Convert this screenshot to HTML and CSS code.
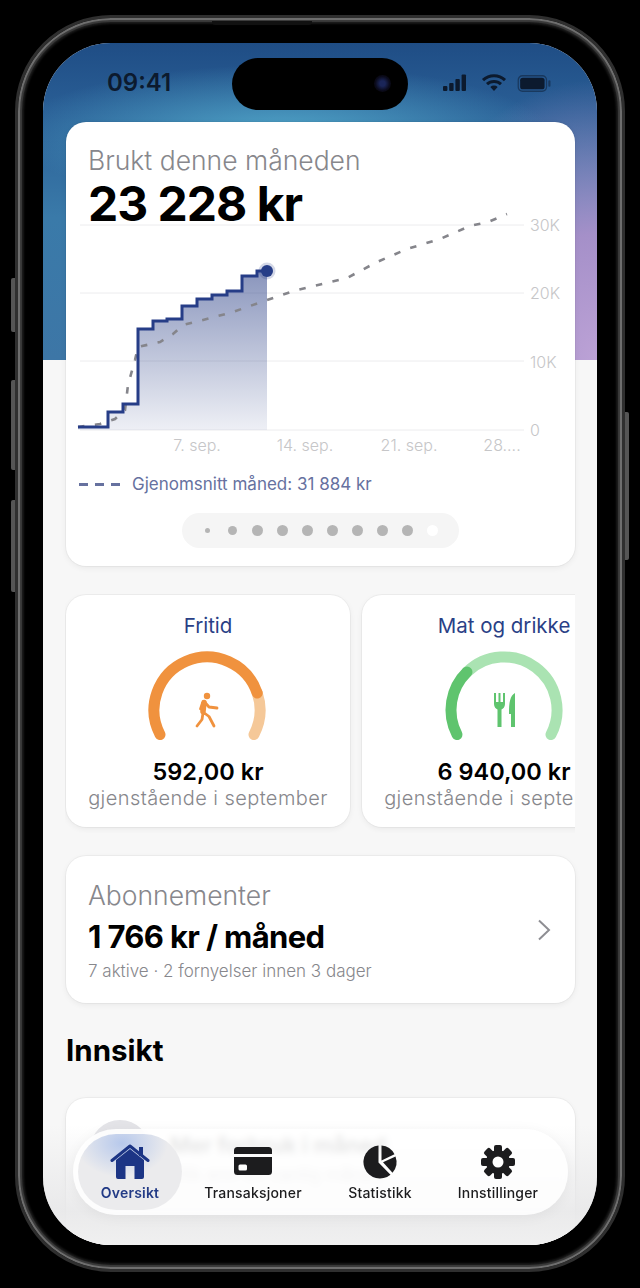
FILE: index.html
```html
<!DOCTYPE html>
<html lang="nb">
<head>
<meta charset="utf-8">
<title>Oversikt</title>
<link rel="stylesheet" href="styles.css">
</head>
<body>
<div class="device">
  <span class="btn btn-mute"></span>
  <span class="btn btn-up"></span>
  <span class="btn btn-down"></span>
  <span class="btn btn-side"></span>
  <span class="speaker"></span>
  <div class="screen">
    <div class="hero"></div>
    <div class="status">
      <span class="time">09:41</span>
      <div class="island"><span class="camera"></span></div>
      <div class="status-icons">
        <svg width="24" height="18" viewBox="0 0 24 18"><rect x="0" y="12" width="4.4" height="5" rx="1"/><rect x="6.2" y="9" width="4.4" height="8" rx="1"/><rect x="12.4" y="5" width="4.4" height="12" rx="1"/><rect x="18.6" y="0.5" width="4.4" height="16.5" rx="1"/></svg>
        <svg width="26" height="18" viewBox="0 0 26 18"><path class="wifi" d="M2 6.2a16 16 0 0 1 22 0M6 10.2a10.300 10.300 0 0 1 14 0"/><path d="M9.300 13 13 17l3.700-4a5.400 5.400 0 0 0-7.400 0z"/></svg>
        <svg class="battery" width="35" height="17" viewBox="0 0 32 16"><rect class="batt" x="0.7" y="0.7" width="26.600" height="14.600" rx="4"/><rect x="2.500" y="2.500" width="23" height="11" rx="2.500"/><rect class="batt-tip" x="29" y="5" width="2" height="6" rx="1"/></svg>
      </div>
    </div>
    <main class="content">
      <section class="card main-card">
        <h2 class="muted-title">Brukt denne måneden</h2>
        <div class="total">23 228 kr</div>
        <svg class="chart" width="509" height="250" viewBox="66 205 509 250">
          <defs>
            <linearGradient id="area" x1="0" y1="0" x2="0" y2="1">
              <stop offset="0" stop-color="#2a3f86" stop-opacity=".55"/>
              <stop offset="1" stop-color="#2a3f86" stop-opacity=".08"/>
            </linearGradient>
          </defs>
          <g class="grid">
            <line x1="80" x2="524" y1="225" y2="225"/>
            <line x1="80" x2="524" y1="293" y2="293"/>
            <line x1="80" x2="524" y1="361" y2="361"/>
            <line x1="80" x2="524" y1="430" y2="430"/>
          </g>
          <g class="ylabels">
            <text x="530" y="231">30K</text>
            <text x="530" y="299">20K</text>
            <text x="530" y="368">10K</text>
            <text x="530" y="436">0</text>
          </g>
          <g class="xlabels">
            <text x="197" y="451">7. sep.</text>
            <text x="305" y="451">14. sep.</text>
            <text x="409" y="451">21. sep.</text>
            <text x="502" y="451">28....</text>
          </g>
          <path fill="url(#area)" d="M78 430V427H108V412H123V404H138V329H153V321H167V319H182V306H197V299H212V295H227V291H242V276H257V271H267V430Z"/>
          <path class="avg" d="M78 427L100 424L115 419L125 410L128 385L135 360L138 347L160 342L173 334L183 325L203 320L233 312L267 300L297 290L347 278L377 262L407 249L440 239L470 226L488 222L507 214"/>
          <path class="spend" d="M78 427H108V412H123V404H138V329H153V321H167V319H182V306H197V299H212V295H227V291H242V276H257V271H267"/>
          <circle class="halo" cx="267" cy="271" r="8.500"/>
          <circle class="dot" cx="267" cy="271" r="6"/>
        </svg>
        <div class="legend">
          <span class="legend-dash"><i></i><i></i><i></i></span>
          <span>Gjenomsnitt måned: 31 884 kr</span>
        </div>
        <div class="pager">
          <i class="pd pd-xs"></i><i class="pd pd-s"></i><i class="pd"></i><i class="pd"></i><i class="pd"></i><i class="pd"></i><i class="pd"></i><i class="pd"></i><i class="pd"></i><i class="pd pd-on"></i>
        </div>
      </section>

      <div class="budget-row">
        <section class="card budget">
          <h3 class="budget-name">Fritid</h3>
          <div class="gauge">
            <svg width="124" height="94" viewBox="-61 -60 124 94">
              <path class="arc orange-l" d="M50.200 -17A53 53 0 0 1 47 24.500"/>
              <path class="arc orange" d="M-47 24.500A53 53 0 1 1 50.200 -17"/>
              <g class="walker">
                <circle class="fillo" cx="0" cy="-14" r="3.200"/>
                <path class="torso" d="M-3 -7.500L-4 1.500"/>
                <path d="M-4 2L2 6.500L7 16M-4 3L-5 9.500L-10 16M-2 -7.500L2 -3L10 -2M-4.500 -7L-6.500 -1"/>
              </g>
            </svg>
          </div>
          <div class="budget-amount">592,00 kr</div>
          <div class="budget-sub">gjenstående i september</div>
        </section>
        <section class="card budget">
          <h3 class="budget-name">Mat og drikke</h3>
          <div class="gauge">
            <svg width="124" height="94" viewBox="-62 -60 124 94">
              <path class="arc green-l" d="M-37 -37.950A53 53 0 0 1 47 24.500"/>
              <path class="arc green" d="M-47 24.500A53 53 0 0 1 -37 -37.950"/>
              <g class="cutlery">
                <path d="M-10 -17h2v9h2.500v-9h2v9h2.500v-9h2v11c0 3-2 5-3.500 5.500V17h-4V-.5C-8 -1 -10 -3 -10 -6z"/>
                <path d="M11 -17V17H7V4H5C5 -8 6 -14 11 -17z"/>
              </g>
            </svg>
          </div>
          <div class="budget-amount">6 940,00 kr</div>
          <div class="budget-sub">gjenstående i september</div>
        </section>
      </div>

      <section class="card subs">
        <div class="subs-text">
          <h2 class="muted-title">Abonnementer</h2>
          <div class="subs-amount">1 766 kr / måned</div>
          <div class="subs-note">7 aktive · 2 fornyelser innen 3 dager</div>
        </div>
        <svg class="chevron" width="14" height="22" viewBox="0 0 14 22"><path d="M2 1.500L12 11L2 20.500"/></svg>
      </section>

      <h2 class="section-title">Innsikt</h2>

      <section class="card insight">
        <span class="insight-icon"></span>
        <div>
          <div class="insight-title">Mer forbruk i måned</div>
          <div class="insight-sub">Ulik enn en vanlig måned</div>
        </div>
      </section>
    </main>
    <div class="bottom-fade"></div>
    <nav class="tabbar">
      <a class="tab tab-on">
        <svg width="40" height="36" viewBox="0 0 40 36"><path class="roof" d="M2 16.500L20 2L38 16.500"/><rect x="29" y="3" width="4" height="9"/><path fill-rule="evenodd" d="M6 16L20 5L34 16V33a2 2 0 0 1-2 2H8a2 2 0 0 1-2-2ZM15.500 22V35H24.500V22Z"/></svg>
        <span>Oversikt</span>
      </a>
      <a class="tab">
        <svg width="40" height="36" viewBox="0 0 40 36"><path fill-rule="evenodd" d="M4.500 3H35.500A3.500 3.500 0 0 1 39 6.500V10H1V6.500A3.500 3.500 0 0 1 4.500 3ZM1 13H39V27.500A3.500 3.500 0 0 1 35.500 31H4.500A3.500 3.500 0 0 1 1 27.500ZM7 20.500A1.500 1.500 0 0 0 5.500 22V25A1.500 1.500 0 0 0 7 26.500H12.500A1.500 1.500 0 0 0 14 25V22A1.500 1.500 0 0 0 12.500 20.500Z"/></svg>
        <span>Transaksjoner</span>
      </a>
      <a class="tab">
        <svg width="40" height="36" viewBox="0 0 40 36"><path d="M18.500 1.600A16.500 16.500 0 1 0 30.500 30.700L18.500 18.500Z"/><path d="M21.500 1.600A16.500 16.500 0 0 1 34.500 10.200L21.500 16.500Z"/><path d="M35.500 12.500A16.500 16.500 0 0 1 32.500 28.800L23 18.300Z"/></svg>
        <span>Statistikk</span>
      </a>
      <a class="tab">
        <svg width="40" height="36" viewBox="0 0 40 36">
          <g transform="translate(20 18)">
            <circle class="gear-ring" r="10.500"/>
            <rect x="-4" y="-17" width="8" height="34" rx="2"/>
            <rect x="-4" y="-17" width="8" height="34" rx="2" transform="rotate(45)"/>
            <rect x="-4" y="-17" width="8" height="34" rx="2" transform="rotate(90)"/>
            <rect x="-4" y="-17" width="8" height="34" rx="2" transform="rotate(135)"/>
            <circle r="12"/>
            <circle class="gear-hole" r="5.500"/>
          </g>
        </svg>
        <span>Innstillinger</span>
      </a>
    </nav>
  </div>
</div>
</body>
</html>
```
FILE: styles.css
```css
* { box-sizing: border-box; }
html, body { margin: 0; padding: 0; }
body {
  width: 640px;
  height: 1288px;
  background: #000;
  padding: 15px;
  font-family: Inter, "Noto Sans", "Liberation Sans", sans-serif;
  overflow: hidden;
}
.device {
  position: relative;
  width: 610px;
  height: 1257px;
  padding: 25px 25px 24px 25px;
  border: 3px solid #2f2f2f;
  border-radius: 96px;
  background: #000;
  box-shadow: inset 0 0 0 2px #6e6e6e, inset 0 0 1px 4px #3c3c3c, inset 0 0 2px 6px #191919;
}
.btn { position: absolute; width: 4px; background: #555; border-radius: 2px 0 0 2px; }
.btn-mute { left: -7px; top: 260px; height: 54px; }
.btn-up { left: -7px; top: 362px; height: 90px; }
.btn-down { left: -7px; top: 482px; height: 92px; }
.btn-side { right: -7px; top: 394px; height: 148px; border-radius: 0 2px 2px 0; }
.speaker { position: absolute; left: 194px; top: 3px; width: 100px; height: 4px; background: #111; border-radius: 0 0 3px 3px; }
.screen {
  position: relative;
  width: 554px;
  height: 1202px;
  border-radius: 68px;
  overflow: hidden;
  background: #f7f7f7;
}
.hero {
  position: absolute;
  left: 0; top: 0; right: 0;
  height: 317px;
  background:
    radial-gradient(270px 70px at 43% 29%, rgba(80,165,200,1), rgba(78,160,196,0) 100%),
    radial-gradient(210px 280px at 100% 100%, rgba(188,162,214,1) 0%, rgba(176,146,204,.9) 45%, rgba(90,100,160,0) 100%),
    linear-gradient(180deg, #1f4d85 0%, #2a5f96 22%, #3a7aa9 55%, #3d76a6 100%);
}
.status {
  position: relative;
  height: 79px;
  display: flex;
  align-items: flex-start;
  color: #0c1a2e;
}
.time {
  position: absolute;
  left: 64px; top: 26px;
  font-size: 24px;
  font-weight: 600;
  line-height: 28px;
}
.island {
  position: absolute;
  left: 189px; top: 15px;
  width: 176px; height: 52px;
  background: #000;
  border-radius: 26px;
}
.camera {
  position: absolute;
  right: 17px; top: 17px;
  width: 17px; height: 17px;
  border-radius: 50%;
  background: radial-gradient(circle, #1a2558 0 22%, #0a0a1a 60%, #040406 100%);
}
.status-icons {
  position: absolute;
  left: 400px; top: 31px;
  display: flex;
  align-items: center;
  gap: 14px;
}
.status-icons svg { fill: #0c1a2e; }
.status-icons .battery { margin-left: -4px; }
.wifi { fill: none; stroke: #0c1a2e; stroke-width: 3; }
.status-icons .batt { fill: none; stroke: rgba(12,26,46,.5); stroke-width: 1.200; }
.status-icons .batt-tip { fill: rgba(12,26,46,.5); }

.content {
  position: relative;
  padding: 0 22px 0 23px;
}
.card {
  background: #fff;
  border-radius: 20px;
  box-shadow: 0 0 0 1px rgba(0,0,0,.035), 0 2px 6px rgba(0,0,0,.06);
}
.main-card {
  height: 444px;
  padding-top: 22px;
  display: flex;
  flex-direction: column;
}
.muted-title {
  margin: 0;
  font-size: 26.500px;
  line-height: 32px;
  font-weight: 300;
  color: #87878c;
}
.main-card .muted-title, .total { margin-left: 22px; }
.total {
  font-size: 48px;
  line-height: 56px;
  font-weight: 700;
  letter-spacing: -1px;
  color: #000;
  height: 29px;
}
.chart { display: block; flex: none; }
.grid line { stroke: #ececee; stroke-width: 1; }
.ylabels text { font-size: 16px; fill: #c6c6c8; font-weight: 300; }
.xlabels text { font-size: 16px; fill: #c6c6c8; text-anchor: middle; font-weight: 300; }
.avg { fill: none; stroke: #85858b; stroke-width: 2.600; stroke-dasharray: 6.500 10.500; }
.spend { fill: none; stroke: #263d87; stroke-width: 3; }
.halo { fill: #263d87; opacity: .2; }
.dot { fill: #263d87; }
.legend {
  display: flex;
  align-items: center;
  gap: 11px;
  margin: 19px 0 0 13px;
  font-size: 17px;
  line-height: 20px;
  color: #66719f;
}
.legend-dash { display: flex; gap: 7px; width: 42px; }
.legend-dash i { width: 9px; height: 3px; background: #66719f; }
.pager {
  margin: 19px auto 0;
  width: 277px;
  height: 35px;
  padding-right: 2px;
  border-radius: 18px;
  background: #f5f5f5;
  display: flex;
  align-items: center;
  justify-content: center;
  gap: 14px;
}
.pd { width: 11px; height: 11px; border-radius: 50%; background: #b5b5b5; flex: none; }
.pd-xs { width: 5px; height: 5px; margin: 0 3px; background: #b5b5b5; }
.pd-s { width: 9px; height: 9px; margin: 0 1px; }
.pd-on { background: #fff; }

.budget-row {
  display: flex;
  gap: 12px;
  width: 510px;
  overflow: hidden;
  padding: 1px 0 6px 1px;
  margin: 28px 0 -6px -1px;
}
.budget {
  flex: none;
  width: 284px;
  height: 232px;
  display: flex;
  flex-direction: column;
  align-items: center;
  padding-top: 16px;
  white-space: nowrap;
}
.budget-name { margin: 0; font-size: 20.500px; line-height: 29px; font-weight: 400; color: #2a3f86; }
.gauge { height: 94px; margin-top: 10px; }
.gauge svg { display: block; }
.arc { fill: none; stroke-width: 11; stroke-linecap: round; }
.orange { stroke: #f0923e; }
.orange-l { stroke: #f5c898; }
.green { stroke: #5fc46e; }
.green-l { stroke: #aae3b2; }
.walker path { fill: none; stroke: #f0923e; stroke-width: 2.800; stroke-linecap: round; stroke-linejoin: round; }
.walker .torso { stroke-width: 5.500; }
.fillo { fill: #f0923e; }
.cutlery path { fill: #5fc46e; }
.budget-amount { margin-top: 13px; font-size: 23.500px; line-height: 30px; font-weight: 600; color: #000; }
.budget-sub { margin-top: -2px; font-size: 20px; line-height: 26px; font-weight: 300; color: #87878c; letter-spacing: .42px; }

.subs {
  margin-top: 29px;
  height: 147px;
  padding: 23px 24px 0 22px;
  display: flex;
  align-items: flex-start;
  justify-content: space-between;
}
.subs-amount { margin-top: 7px; font-size: 31px; line-height: 38px; font-weight: 700; letter-spacing: -.65px; color: #000; }
.subs-note { margin-top: 4px; font-size: 17px; line-height: 22px; font-weight: 300; color: #87878c; }
.chevron { margin-top: 40px; fill: none; stroke: #8e8e93; stroke-width: 2; }
.section-title {
  margin: 28px 0 29px;
  font-size: 29.500px;
  line-height: 38px;
  font-weight: 700;
  color: #000;
}
.insight {
  margin-top: 0;
  height: 190px;
  padding: 32px 24px;
  display: flex;
  gap: 20px;
  white-space: nowrap;
}
.insight-icon { width: 60px; height: 60px; margin-top: -10px; border-radius: 50%; background: #e4e4e8; flex: none; }
.insight-title { font-size: 22px; line-height: 30px; font-weight: 600; color: #111; }
.insight-sub { margin-top: 4px; font-size: 18px; color: #777; }

.bottom-fade {
  position: absolute;
  left: 0; right: 0; bottom: 0;
  height: 120px;
  background: linear-gradient(180deg, rgba(232,232,233,0) 0%, rgba(232,232,233,.9) 72%, rgba(240,240,240,1) 100%);
}
.tabbar {
  position: absolute;
  left: 30px; bottom: 30px;
  width: 495px;
  height: 86px;
  padding: 5px;
  border-radius: 43px;
  background: rgba(255,255,255,.86);
  -webkit-backdrop-filter: blur(3.500px);
  backdrop-filter: blur(3.500px);
  box-shadow: 0 2px 14px rgba(0,0,0,.05);
  display: grid;
  grid-template-columns: 104px 142px 112px 124px;
}
.tab {
  display: flex;
  flex-direction: column;
  align-items: center;
  padding-top: 10px;
  font-size: 14px;
  font-weight: 500;
  line-height: 18px;
  color: #1c1c1e;
  letter-spacing: .2px;
}
.tab svg { fill: #1c1c1e; display: block; margin-bottom: 4px; }
.tab-on {
  color: #233b86;
  font-weight: 600;
  border-radius: 38px;
  background:
    radial-gradient(46px 34px at 42% 12%, rgba(170,192,235,.8), rgba(170,192,235,0)),
    #ebebed;
}
.tab-on svg { fill: #1c3585; }
.roof { fill: none; stroke: #1c3585; stroke-width: 3; stroke-linecap: round; stroke-linejoin: round; }
.gear-ring { fill: none; }
.tab svg .gear-hole { fill: #fff; }
```
